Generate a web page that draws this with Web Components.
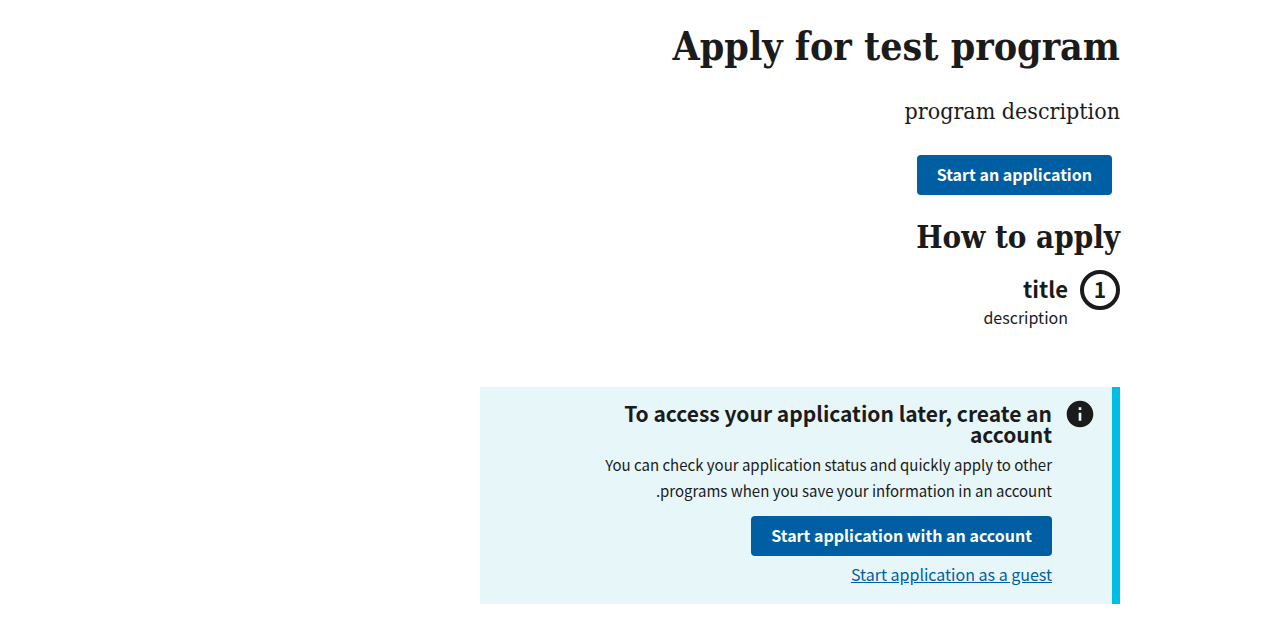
<!DOCTYPE html>
<html lang="en" dir="rtl">
<head>
<meta charset="utf-8">
<meta name="viewport" content="width=device-width, initial-scale=1">
<title>Apply for test program</title>
<style>
  body {
    margin: 0;
    background: #fff;
    color: #1b1b1b;
    font-family: "Noto Sans CJK SC", "Noto Sans", sans-serif;
    font-size: 16px;
    --serif: "DejaVu Serif Condensed", "DejaVu Serif", serif;
    --primary: #005ea2;
  }
</style>
</head>
<body>
<program-page>
  <span slot="title">Apply for test program</span>
  <span slot="intro">program description</span>
  <action-button slot="action">Start an application</action-button>
  <span slot="steps-title">How to apply</span>
  <process-step slot="steps" number="1">
    <span slot="title">title</span>
    description
  </process-step>
  <info-alert slot="alert">
    <span slot="title">To access your application later, create an account</span>
    You can check your application status and quickly apply to other programs when you save your information in an account.
    <action-button slot="actions">Start application with an account</action-button>
    <text-link slot="actions" href="#guest">Start application as a guest</text-link>
  </info-alert>
</program-page>

<script>
  class BaseElement extends HTMLElement {
    constructor() {
      super();
      this.attachShadow({ mode: "open" }).innerHTML = this.constructor.markup;
    }
  }

  class ProgramPage extends BaseElement {
    static markup = `
      <style>
        :host { display: block; }
        main { max-width: 1024px; margin: 0 auto; padding: 20px 32px 24px; box-sizing: border-box; }
        .column { max-width: 640px; }
        h1, h2, p { margin: 0; font-family: var(--serif); }
        h1 { font-size: 39px; line-height: 52px; }
        .intro { font-size: 23px; line-height: 36px; margin-top: 21px; }
        .action { margin: 26px 8px 0; }
        h2 { font-size: 31px; line-height: 40px; margin-top: 22px; }
        ol { list-style: none; margin: 13px 0 0; padding: 0 0 56px; }
      </style>
      <main>
        <div class="column">
          <h1><slot name="title"></slot></h1>
          <p class="intro"><slot name="intro"></slot></p>
          <div class="action"><slot name="action"></slot></div>
          <h2><slot name="steps-title"></slot></h2>
          <ol><li><slot name="steps"></slot></li></ol>
          <slot name="alert"></slot>
        </div>
      </main>`;
  }

  class ActionButton extends BaseElement {
    static markup = `
      <style>
        :host { display: block; width: fit-content; }
        button {
          display: block; margin: 0; border: 0; border-radius: 4px; padding: 11px 20px 13px;
          background: var(--primary); color: #fff; font: inherit; font-weight: 700;
          line-height: 16px; cursor: pointer;
        }
      </style>
      <button type="button"><slot></slot></button>`;
  }

  class TextLink extends BaseElement {
    static markup = `
      <style>
        :host { display: block; line-height: 24px; }
        a { color: var(--primary); text-decoration: underline; }
      </style>
      <a><slot></slot></a>`;
    connectedCallback() {
      this.shadowRoot.querySelector("a").href = this.getAttribute("href");
    }
  }

  class ProcessStep extends BaseElement {
    static markup = `
      <style>
        :host { display: flex; gap: 12px; align-items: flex-start; }
        .number {
          box-sizing: border-box; width: 40px; height: 40px; flex: none;
          border: 4px solid #1b1b1b; border-radius: 50%;
          font-size: 21px; font-weight: 700; line-height: 30px; text-align: center;
        }
        h3 { margin: 8px 0 0; font-size: 22px; line-height: 21px; }
        p { margin: 5px 0 0; line-height: 26px; }
      </style>
      <div class="number"></div>
      <div>
        <h3><slot name="title"></slot></h3>
        <p><slot></slot></p>
      </div>`;
    connectedCallback() {
      this.shadowRoot.querySelector(".number").textContent = this.getAttribute("number");
    }
  }

  class InfoAlert extends BaseElement {
    static markup = `
      <style>
        :host {
          display: flex; gap: 12px; align-items: flex-start;
          border-inline-start: 8px solid #00bde3; background: #e7f6f8;
          margin-top: 1px; padding-block: 16px 18px; padding-inline: 16px 60px;
        }
        svg { flex: none; width: 32px; height: 32px; margin-top: -5px; fill: #1b1b1b; }
        h3 { margin: 0; font-size: 21px; line-height: 21px; }
        p { margin: 7px 0 0; font-size: 15px; line-height: 26px; }
        .actions { display: grid; gap: 6px; margin-top: 12px; }
      </style>
      <svg viewBox="0 0 24 24" aria-hidden="true">
        <path d="M12 2C6.48 2 2 6.48 2 12s4.480 10 10 10 10-4.480 10-10S17.520 2 12 2zm1 15h-2v-6h2v6zm0-8h-2V7h2v2z"/>
      </svg>
      <div>
        <h3><slot name="title"></slot></h3>
        <p><slot></slot></p>
        <div class="actions"><slot name="actions"></slot></div>
      </div>`;
  }

  customElements.define("program-page", ProgramPage);
  customElements.define("action-button", ActionButton);
  customElements.define("text-link", TextLink);
  customElements.define("process-step", ProcessStep);
  customElements.define("info-alert", InfoAlert);
</script>
</body>
</html>
